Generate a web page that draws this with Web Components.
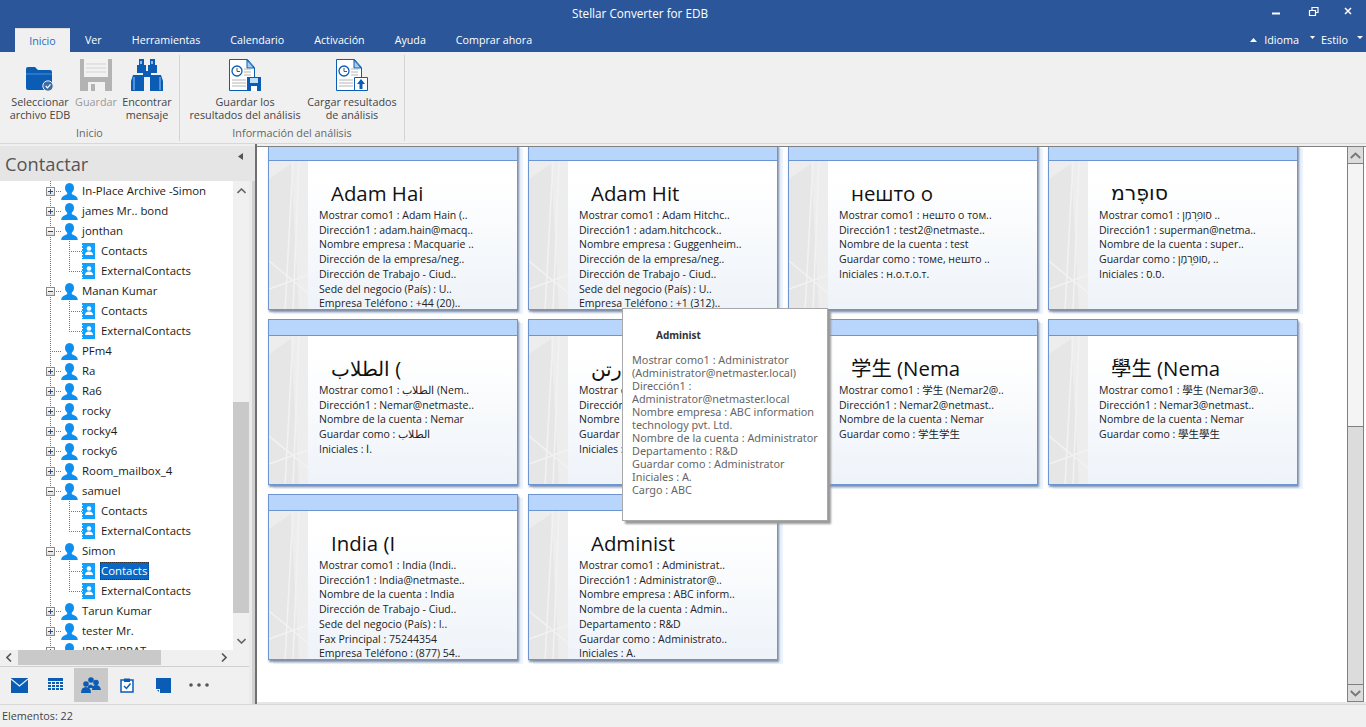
<!DOCTYPE html>
<html lang="es"><head><meta charset="utf-8"><title>Stellar Converter for EDB</title>
<style>
html,body{margin:0;padding:0;height:727px;overflow:hidden;background:#f0f0f0;font-family:"Open Sans","Noto Sans","Noto Sans CJK SC",sans-serif}
</style></head><body>
<app-shell>
  <title-bar slot="title">Stellar Converter for EDB</title-bar>
  <ribbon-tabs slot="tabs"></ribbon-tabs>
  <ribbon-bar slot="ribbon">
    <ribbon-group label="Inicio" style="width:179px" pad="2">
      <ribbon-button icon="folder" width="60" style="margin-left:10px">Seleccionar<br>archivo EDB</ribbon-button>
      <ribbon-button icon="floppy" width="48" style="margin-left:2px" disabled>Guardar</ribbon-button>
      <ribbon-button icon="binoc" width="52" style="margin-left:1px">Encontrar<br>mensaje</ribbon-button>
    </ribbon-group>
    <ribbon-group label="Información del análisis" style="width:224px">
      <ribbon-button icon="docsave" width="118" style="margin-left:6px">Guardar los<br>resultados del análisis</ribbon-button>
      <ribbon-button icon="docload" width="94" style="margin-left:1px">Cargar resultados<br>de análisis</ribbon-button>
    </ribbon-group>
  </ribbon-bar>
  <side-panel slot="side">
    <tree-view>
      <tree-row exp="plus" label="In-Place Archive -Simon"></tree-row>
      <tree-row exp="plus" label="james Mr.. bond"></tree-row>
      <tree-row exp="minus" label="jonthan"></tree-row>
      <tree-row child label="Contacts"></tree-row>
      <tree-row child last label="ExternalContacts"></tree-row>
      <tree-row exp="minus" label="Manan Kumar"></tree-row>
      <tree-row child label="Contacts"></tree-row>
      <tree-row child last label="ExternalContacts"></tree-row>
      <tree-row label="PFm4"></tree-row>
      <tree-row exp="plus" label="Ra"></tree-row>
      <tree-row exp="plus" label="Ra6"></tree-row>
      <tree-row exp="plus" label="rocky"></tree-row>
      <tree-row exp="plus" label="rocky4"></tree-row>
      <tree-row exp="plus" label="rocky6"></tree-row>
      <tree-row exp="plus" label="Room_mailbox_4"></tree-row>
      <tree-row exp="minus" label="samuel"></tree-row>
      <tree-row child label="Contacts"></tree-row>
      <tree-row child last label="ExternalContacts"></tree-row>
      <tree-row exp="minus" label="Simon"></tree-row>
      <tree-row child selected label="Contacts"></tree-row>
      <tree-row child last label="ExternalContacts"></tree-row>
      <tree-row exp="plus" label="Tarun Kumar"></tree-row>
      <tree-row exp="plus" label="tester Mr."></tree-row>
      <tree-row exp="plus" label="IPPAT-IPPAT"></tree-row>
    </tree-view>
  </side-panel>
  <card-area slot="main">
    <contact-card name="Adam Hai">
      <div>Mostrar como1 : Adam Hain (..</div><div>Dirección1 : adam.hain@macq..</div><div>Nombre empresa : Macquarie ..</div><div>Dirección de la empresa/neg..</div><div>Dirección de Trabajo - Ciud..</div><div>Sede del negocio (País) : U..</div><div>Empresa Teléfono : +44 (20)..</div>
    </contact-card>
    <contact-card name="Adam Hit">
      <div>Mostrar como1 : Adam Hitchc..</div><div>Dirección1 : adam.hitchcock..</div><div>Nombre empresa : Guggenheim..</div><div>Dirección de la empresa/neg..</div><div>Dirección de Trabajo - Ciud..</div><div>Sede del negocio (País) : U..</div><div>Empresa Teléfono : +1 (312)..</div>
    </contact-card>
    <contact-card name="нешто о">
      <div>Mostrar como1 : нешто о том..</div><div>Dirección1 : test2@netmaste..</div><div>Nombre de la cuenta : test</div><div>Guardar como : томе, нешто ..</div><div>Iniciales : н.о.т.о.т.</div>
    </contact-card>
    <contact-card name="סופֶּרמ" style="--nf:'DejaVu Sans'">
      <div>Mostrar como1 : סופֶּרמָן ..</div><div>Dirección1 : superman@netma..</div><div>Nombre de la cuenta : super..</div><div>Guardar como : סופֶּרמָן, ..</div><div>Iniciales : ס.ס.</div>
    </contact-card>
    <contact-card name="الطلاب (">
      <div>Mostrar como1 : الطلاب (Nem..</div><div>Dirección1 : Nemar@netmaste..</div><div>Nombre de la cuenta : Nemar</div><div>Guardar como : الطلاب</div><div>Iniciales : ا.</div>
    </contact-card>
    <contact-card name="رتن">
      <div>Mostrar c</div><div>Dirección</div><div>Nombre</div><div>Guardar</div><div>Iniciales :</div>
    </contact-card>
    <contact-card name="学生 (Nema">
      <div>Mostrar como1 : 学生 (Nemar2@..</div><div>Dirección1 : Nemar2@netmast..</div><div>Nombre de la cuenta : Nemar</div><div>Guardar como : 学生学生</div>
    </contact-card>
    <contact-card name="學生 (Nema">
      <div>Mostrar como1 : 學生 (Nemar3@..</div><div>Dirección1 : Nemar3@netmast..</div><div>Nombre de la cuenta : Nemar</div><div>Guardar como : 學生學生</div>
    </contact-card>
    <contact-card name="India (I">
      <div>Mostrar como1 : India (Indi..</div><div>Dirección1 : India@netmaste..</div><div>Nombre de la cuenta : India</div><div>Dirección de Trabajo - Ciud..</div><div>Sede del negocio (País) : I..</div><div>Fax Principal : 75244354</div><div>Empresa Teléfono : (877) 54..</div>
    </contact-card>
    <contact-card name="Administ">
      <div>Mostrar como1 : Administrat..</div><div>Dirección1 : Administrator@..</div><div>Nombre empresa : ABC inform..</div><div>Nombre de la cuenta : Admin..</div><div>Departamento : R&amp;D</div><div>Guardar como : Administrato..</div><div>Iniciales : A.</div>
    </contact-card>
    <contact-tooltip slot="over" name="Administ">
      <div>Mostrar como1 : Administrator (Administrator@netmaster.local)</div><div>Dirección1 : Administrator@netmaster.local</div><div>Nombre empresa : ABC information technology pvt. Ltd.</div><div>Nombre de la cuenta : Administrator</div><div>Departamento : R&amp;D</div><div>Guardar como : Administrator</div><div>Iniciales : A.</div><div>Cargo : ABC</div>
    </contact-tooltip>
  </card-area>
  <status-bar slot="status">Elementos: 22</status-bar>
</app-shell>
<script>
function def(name, css, html, init){
  customElements.define(name, class extends HTMLElement{
    connectedCallback(){
      if(this.shadowRoot) return;
      const r=this.attachShadow({mode:'open'});
      r.innerHTML='<style>'+css+'</style>'+(typeof html==='function'?html(this):html);
      if(init) init(this,r);
    }
  });
}
const ICONS={
folder:`<svg width="32" height="32" viewBox="0 0 32 32"><path d="M2 10q0-2 2-2h7l3 3h12q2 0 2 2v16q0 2-2 2h-22q-2 0-2-2z" fill="#0b5cb5"/><path d="M2 15h26" stroke="#4f8fd6" stroke-width="1"/><circle cx="24" cy="27" r="5.200" fill="#3d6e9f" stroke="#f0f0f0" stroke-width="1"/><path d="M21.700 27l1.800 1.800 3-3.500" fill="none" stroke="#fff" stroke-width="1.200"/></svg>`,
floppy:`<svg width="32" height="32" viewBox="0 0 32 32"><path d="M0 0h32v32h-32z" fill="#b3b3b3"/><path d="M4 0h24v18h-24z" fill="#f2f2f2"/><path d="M6 5h20M6 9h20M6 13h20" stroke="#d4d4d4"/><path d="M8 23h17v9h-17z" fill="#f2f2f2"/><path d="M11 25h4v7h-4z" fill="#b3b3b3"/></svg>`,
binoc:`<svg width="32" height="32" viewBox="0 0 32 32"><path d="M8 0h5v6h-5zM19 0h5v6h-5z" fill="#0b5cb5"/><path d="M6 6h9v6h2v-6h9v8h-6v4h-8v-4h-6z" fill="#0b5cb5"/><path d="M2 16h11v16h-13v-10z M19 16h11l2 6v10h-13z" fill="#0b5cb5"/><path d="M3 18v13M29 18v13" stroke="#6aa3e0" stroke-width="1.500"/><path d="M9 2h2v3h-2zM20 2h2v3h-2z" fill="#8fbdea"/></svg>`,
docsave:`<svg width="32" height="32" viewBox="0 0 32 32"><path d="M.5.500h18l7 8v23h-25z" fill="#fff" stroke="#0b5cb5"/><path d="M18 1v8h7z" fill="#a7cfee" stroke="#0b5cb5"/><circle cx="8" cy="12" r="5" fill="#fff" stroke="#0b5cb5" stroke-width="1.300"/><path d="M8 9v3.500h3" fill="none" stroke="#555"/><path d="M15 10h7M15 13h7M15 16h7M3 21h14M3 24h14M3 27h14" stroke="#b5b5b5"/><path d="M18 18h14v14h-14z" fill="#0b5cb5"/><path d="M21 19h8v5h-8z" fill="#bfe0f7"/><path d="M22 27h6v5h-6z" fill="#fff"/></svg>`,
docload:`<svg width="32" height="32" viewBox="0 0 32 32"><path d="M.5.500h18l7 8v23h-25z" fill="#fff" stroke="#0b5cb5"/><path d="M18 1v8h7z" fill="#a7cfee" stroke="#0b5cb5"/><circle cx="8" cy="12" r="5" fill="#fff" stroke="#0b5cb5" stroke-width="1.300"/><path d="M8 9v3.500h3" fill="none" stroke="#555"/><path d="M15 10h7M15 13h7M15 16h7M3 21h14M3 24h14M3 27h14" stroke="#b5b5b5"/><path d="M18.500 18.500h13v13h-13z" fill="#fff" stroke="#0b5cb5"/><path d="M25 20l4 5h-2.500v5h-3v-5h-2.500z" fill="#0b5cb5"/></svg>`
};
def('app-shell',`:host{display:grid;grid-template-rows:28px 24px 92px 560px 23px;grid-template-columns:257px 1fr;width:1366px;height:727px;background:#f0f0f0}
.s,.m{min-height:0;min-width:0}.full{grid-column:1/3}`,
`<div class="full"><slot name="title"></slot></div><div class="full"><slot name="tabs"></slot></div><div class="full"><slot name="ribbon"></slot></div><div class="s"><slot name="side"></slot></div><div class="m"><slot name="main"></slot></div><div class="full"><slot name="status"></slot></div>`);
def('title-bar',`:host{display:flex;height:28px;background:#2b579a;color:#fff;font:11.700px "Open Sans",sans-serif;align-items:center;justify-content:center;padding:0 86px 2px 0;box-sizing:border-box;position:relative}
.w{position:absolute;right:0;top:0;display:flex}
.w svg{display:block}`,
`<slot></slot><div class="w"><svg width="110" height="26" viewBox="0 0 110 26"><path d="M16 12.500h8v2h-8z" fill="#fff"/><path d="M53.500 10.500h6v5h-6zM56 10v-2.500h6v5h-2" fill="none" stroke="#fff" stroke-width="1.200"/><path d="M89 8l6 6M95 8l-6 6" stroke="#fff" stroke-width="1.500"/></svg></div>`);
def('ribbon-tabs',`:host{display:flex;height:24px;background:#2b579a;color:#fff;font:10.700px/24px "Open Sans",sans-serif;padding-left:15px;box-sizing:border-box}
span{display:block;padding:0 15px}
.a{background:#f0f0f0;color:#2b6cc4;width:55px;box-sizing:border-box;text-align:center;padding:0;border-top:1px solid #dcdcdc;line-height:24px}
.r{margin-left:auto;display:flex;align-items:center;padding-right:3px}
.r svg{display:block}
b{font-weight:400;font-size:10.800px}`,
`<span class="a">Inicio</span><span>Ver</span><span>Herramientas</span><span>Calendario</span><span>Activación</span><span>Ayuda</span><span>Comprar ahora</span>
<div class="r"><svg width="7" height="4" viewBox="0 0 7 4"><path d="M0 4l3.500-4 3.500 4z" fill="#fff"/></svg><b style="margin:0 11px 0 7px">Idioma</b><svg width="5" height="3" viewBox="0 0 5 3" style="margin-bottom:5px"><path d="M0 0h5l-2.500 3z" fill="#fff"/></svg><b style="margin:0 9px 0 6px">Estilo</b><svg width="6" height="3" viewBox="0 0 6 3" style="margin-bottom:5px"><path d="M0 0h6l-3 3z" fill="#fff"/></svg></div>`);
def('ribbon-bar',`:host{display:flex;height:92px;background:#f0f0f0;border-bottom:1px solid #d8d8d8;box-sizing:border-box;padding-top:3px}`,`<slot></slot>`);
def('ribbon-group',`:host{display:flex;flex-direction:column;height:86px;border-right:1px solid #d4d4d4;box-sizing:content-box;font:10.800px/13px "Open Sans",sans-serif;color:#444}
.b{display:flex;flex:1;align-items:flex-start;gap:0;padding-top:4px}.l{text-align:center;color:#666;height:15px;line-height:14px;font-size:10.800px}`,
h=>`<div class="b"><slot></slot></div><div class="l">${h.getAttribute('label')}</div>`);
def('ribbon-button',`:host{display:flex;flex-direction:column;align-items:center;text-align:center;white-space:nowrap}
svg{display:block;margin-bottom:4px}:host([disabled]){color:#999}`,
h=>{h.style.width=h.getAttribute('width')+'px';return ICONS[h.getAttribute('icon')]+'<div><slot></slot></div>'});
def('side-panel',`:host{display:flex;flex-direction:column;height:560px;width:257px;box-sizing:border-box;background:#f0f0f0;border-right:2px solid #707070;position:relative;padding-top:2px}
.wrap{width:249px;display:flex;flex-direction:column;height:100%;position:relative;z-index:1}
.hd{height:35px;background:#e5e5e5;display:flex;justify-content:space-between;align-items:center;font:18.300px "Open Sans",sans-serif;color:#555;padding:0 12px 0 5px;box-sizing:border-box;width:255px}
.hd svg{display:block;margin-top:-15px}
.mid{display:flex;height:469px}.tree{width:233px;background:#fff;overflow:hidden}
.vs{width:16px;background:#f0f0f0;display:flex;flex-direction:column;align-items:center}
.vs .th{width:16px;height:211px;background:#c9c9c9;margin-top:202px}
.ar{height:19px;display:flex;align-items:center;justify-content:center;width:16px;flex:none}
.hs{height:15px;display:flex;align-items:center;background:#f0f0f0;width:249px;margin-bottom:1px}
.hs .th{width:143px;height:15px;background:#c9c9c9}.hs .ar{width:18px}
.hs .sp{flex:1}
.nav{border-top:1px solid #d0d0d0;height:37px;width:249px;display:flex;padding-left:1px;box-sizing:border-box;background:#f0f0f0;flex:none}
.nav span{width:36px;height:36px;display:flex;align-items:center;justify-content:center}
.nav .on{background:linear-gradient(#c9c9c9,#c9c9c9) center/34px 34px no-repeat}
.stripe{position:absolute;right:0;top:2px;bottom:0;width:6px;background:linear-gradient(90deg,#ebebeb 0 3px,#d0d0d0 3px)}`,
`<div class="stripe"></div><div class="wrap"><div class="hd">Contactar<svg width="5" height="7" viewBox="0 0 5 7"><path d="M5 0v7l-5-3.500z" fill="#555"/></svg></div><div class="mid"><div class="tree"><slot></slot></div>
<div class="vs"><div class="ar"><svg width="9" height="6" viewBox="0 0 9 6"><path d="M.5 5l4-4 4 4" fill="none" stroke="#666" stroke-width="1.600"/></svg></div><div class="th"></div><div class="ar" style="margin-top:auto"><svg width="9" height="6" viewBox="0 0 9 6"><path d="M.5 1l4 4 4-4" fill="none" stroke="#666" stroke-width="1.600"/></svg></div></div></div>
<div class="hs"><div class="ar"><svg width="6" height="9" viewBox="0 0 6 9"><path d="M5 .5l-4 4 4 4" fill="none" stroke="#555" stroke-width="1.600"/></svg></div><div class="th"></div><div class="sp"></div><div class="ar" style="margin-right:16px"><svg width="6" height="9" viewBox="0 0 6 9"><path d="M1 .5l4 4-4 4" fill="none" stroke="#555" stroke-width="1.600"/></svg></div></div>
<div class="nav">
<span><svg width="17" height="15" viewBox="0 0 17 15"><path d="M0 0h17v15h-17z" fill="#0b5cb5"/><path d="M0 1l8.500 7 8.500-7" fill="none" stroke="#f0f0f0" stroke-width="1.200"/></svg></span>
<span><svg width="15" height="14" viewBox="0 0 15 14"><path d="M0 0h15v3h-15z" fill="#0b5cb5"/><path d="M0 4h3v2h-3zM4 4h3v2h-3zM8 4h3v2h-3zM12 4h3v2h-3zM0 7h3v2h-3zM4 7h3v2h-3zM8 7h3v2h-3zM12 7h3v2h-3zM0 10h3v2h-3zM4 10h3v2h-3zM8 10h3v2h-3zM12 10h3v2h-3z" fill="#0b5cb5"/></svg></span>
<span class="on"><svg width="20" height="16" viewBox="0 0 20 16"><circle cx="10" cy="3" r="2.800" fill="#0b5cb5"/><circle cx="15" cy="5.500" r="2.800" fill="#0b5cb5"/><circle cx="5" cy="7" r="2.800" fill="#0b5cb5"/><path d="M0 16q0-6 5-6t5 6zM11 13q0-5 4-5t5 5z" fill="#0b5cb5"/><path d="M7 9q3-3 5 0v2h-5z" fill="#0b5cb5"/></svg></span>
<span><svg width="14" height="16" viewBox="0 0 14 16"><path d="M1 3h12v12h-12z" fill="#fff" stroke="#0b5cb5" stroke-width="1.500"/><path d="M4 1.500h6v3.500h-6z" fill="#0b5cb5"/><path d="M4 9l2.500 2.500 4-5" fill="none" stroke="#0b5cb5" stroke-width="1.500"/></svg></span>
<span><svg width="15" height="15" viewBox="0 0 15 15"><path d="M0 0h15v15h-11v-4h-4z" fill="#0b5cb5"/><path d="M1 12h2v2z" fill="#0b5cb5"/></svg></span>
<span><svg width="20" height="4" viewBox="0 0 20 4"><circle cx="2" cy="2" r="1.800" fill="#555"/><circle cx="10" cy="2" r="1.800" fill="#555"/><circle cx="18" cy="2" r="1.800" fill="#555"/></svg></span>
</div></div>`);
def('tree-view',`:host{display:block;font:11.400px/20px "Open Sans",sans-serif;color:#1a1a1a}`,`<slot></slot>`);
const dotV=(x,h)=>`repeating-linear-gradient(#777 0 1px,transparent 1px 2px) ${x}px 0/1px ${h} no-repeat`;
const dotH=(x,w)=>`repeating-linear-gradient(90deg,#777 0 1px,transparent 1px 2px) ${x}px 10px/${w}px 1px no-repeat`;
def('tree-row',`:host{display:flex;height:20px;align-items:center;white-space:nowrap}
.ex{width:9px;height:9px;margin-left:46px;box-sizing:border-box;border:1px solid #8a8a8a;background:linear-gradient(#fff,#ddd);display:flex;align-items:center;justify-content:center;visibility:hidden}
.ex.on{visibility:visible}
.user{margin-left:6px;display:block}.bk{margin-left:82px;display:block}
.lb{margin-left:5px;padding:0 1px 2px;line-height:17px}
.sel{background:#0a67c4;color:#fff;outline:1px dotted #333;outline-offset:-1px;margin-left:5px;padding:0 2px 0 1px;width:46px;height:18px;line-height:17px}`,
h=>{
 const child=h.hasAttribute('child'),exp=h.getAttribute('exp'),last=h.hasAttribute('last');
 let bg=[dotV(50,'100%')];
 if(child){bg.push(dotV(69,last?'11px':'100%'));bg.push(dotH(69,13));}
 else bg.push(dotH(50,11));
 h.style.background=bg.join(',');
 const sym=exp==='plus'?'<svg width="7" height="7" viewBox="0 0 7 7"><path d="M1 3.500h5M3.500 1v5" stroke="#2b4a80"/></svg>':exp==='minus'?'<svg width="7" height="7" viewBox="0 0 7 7"><path d="M1 3.500h5" stroke="#2b4a80"/></svg>':'';
 const label=h.getAttribute('label');
 if(child) return `<svg class="bk" width="13" height="16" viewBox="0 0 13 16"><path d="M0 0h13v16h-13z" fill="#12a0ff"/><path d="M0 2h1v1h-1zM0 5h1v1h-1zM0 8h1v1h-1zM0 11h1v1h-1zM0 14h1v1h-1z" fill="#fff"/><circle cx="7" cy="5.500" r="2.300" fill="#fff"/><path d="M3 12q0-3.500 4-3.500t4 3.500z" fill="#fff"/></svg><span class="${h.hasAttribute('selected')?'sel':'lb'}">${label}</span>`;
 return `<span class="ex ${exp?'on':''}">${sym}</span><svg class="user" width="17" height="17" viewBox="0 0 17 17"><path d="M8.500 0c3 0 4.500 2.200 4.500 5 0 2-1 3.800-2.200 4.700v1.500c2 .8 6 1.800 6 5.800h-16.600c0-4 4-5 6-5.800v-1.500c-1.200-.9-2.200-2.700-2.200-4.700 0-2.800 1.500-5 4.500-5z" fill="#0e8ff0"/></svg><span class="lb" style="margin-left:3px">${label}</span>`;
});
def('card-area',`:host{display:block;height:560px;position:relative;border-top:2px solid #f0f0f0;border-bottom:2px solid #e6e6e6;box-sizing:border-box;background:#fff;overflow:hidden}
.top{height:1px;background:#808080}
.row{display:flex;height:555px}
.v{flex:1;overflow:hidden;position:relative}
.g{display:grid;grid-template-columns:repeat(4,250px);grid-auto-rows:166px;gap:9px 10px;margin:-3px 0 0 11px}
.sb{width:17px;margin-right:2px;box-sizing:border-box;border:1px solid #808080;border-width:0 1px 1px;display:flex;flex-direction:column;background:#f4f4f4}
.btn{height:17px;background:#dcdcdc;display:flex;align-items:center;justify-content:center;box-sizing:border-box;flex:none}
.sp{height:262px}.th{flex:1;background:#dcdcdc;border-top:1px solid #808080}`,
`<div class="top"></div><div class="row"><div class="v"><div class="g"><slot></slot></div></div>
<div class="sb"><div class="btn" style="border-bottom:1px solid #808080"><svg width="11" height="7" viewBox="0 0 11 7"><path d="M.8 6l4.700-4.500 4.700 4.500" fill="none" stroke="#777" stroke-width="1.800"/></svg></div><div class="sp"></div><div class="th"></div><div class="btn" style="border-top:1px solid #808080"><svg width="11" height="7" viewBox="0 0 11 7"><path d="M.8 1l4.700 4.500 4.700-4.500" fill="none" stroke="#777" stroke-width="1.800"/></svg></div></div></div><slot name="over"></slot>`);
def('contact-card',`:host{display:flex;flex-direction:column;width:250px;height:166px;box-sizing:border-box;border:1px solid #6c96d3;box-shadow:1px 2px 2px rgba(50,70,110,.6),5px 4px 0 #ecf3fc;background:#fff;color:#222;font:10.500px/14.700px "Open Sans","Noto Sans","Noto Sans CJK SC",sans-serif;overflow:hidden}
.h{height:15px;background:#b8d5fb;border-bottom:1px solid #6c96d3;flex:none}
.b{flex:1;display:flex;min-height:0;background:linear-gradient(#fff 15%,#eef3f9)}
.bg{width:39px;flex:none;background:#e8e8e8}
.bg svg{display:block}
.t{padding-left:11px;flex:1;min-width:0;white-space:nowrap;overflow:hidden;padding-top:21px}
.n{font-size:20.400px;line-height:27px;padding-left:12px;color:#111;height:24px;margin-top:-2px;margin-bottom:4px;font-family:var(--nf,inherit)}`,
h=>`<div class="h"></div><div class="b"><div class="bg"><svg width="39" height="150" viewBox="0 0 39 150"><path d="M0 0h39v150h-39z" fill="#ededed"/><path d="M0 18L22 3l8 147h-30z" fill="#e6e6e6"/><path d="M24 0l-8 150M30 0l-6 150M0 100l39 32M0 128l39-14" stroke="#f2f2f2" stroke-width="1.500"/></svg></div><div class="t"><div class="n">${h.getAttribute('name')}</div><slot></slot></div></div>`);
def('contact-tooltip',`:host{position:absolute;left:365px;top:162px;width:206px;height:213px;box-sizing:border-box;background:#fff;border:1px solid #a8a8a8;box-shadow:3px 3px 2px #9a9a9a;padding:20px 8px 0 9px;font:10.850px/13px "Noto Sans",sans-serif;color:#666}
.n{font-weight:700;color:#333;padding-left:24px;margin-bottom:11px;font-size:10px;line-height:13px}`,
h=>`<div class="n">${h.getAttribute('name')}</div><slot></slot>`);
def('status-bar',`:host{display:block;height:23px;background:#f0f0f0;border-top:1px solid #d8d8d8;box-sizing:border-box;font:10.800px/22px "Open Sans",sans-serif;color:#444;padding-left:2px}`,`<slot></slot>`);
</script>
</body></html>
